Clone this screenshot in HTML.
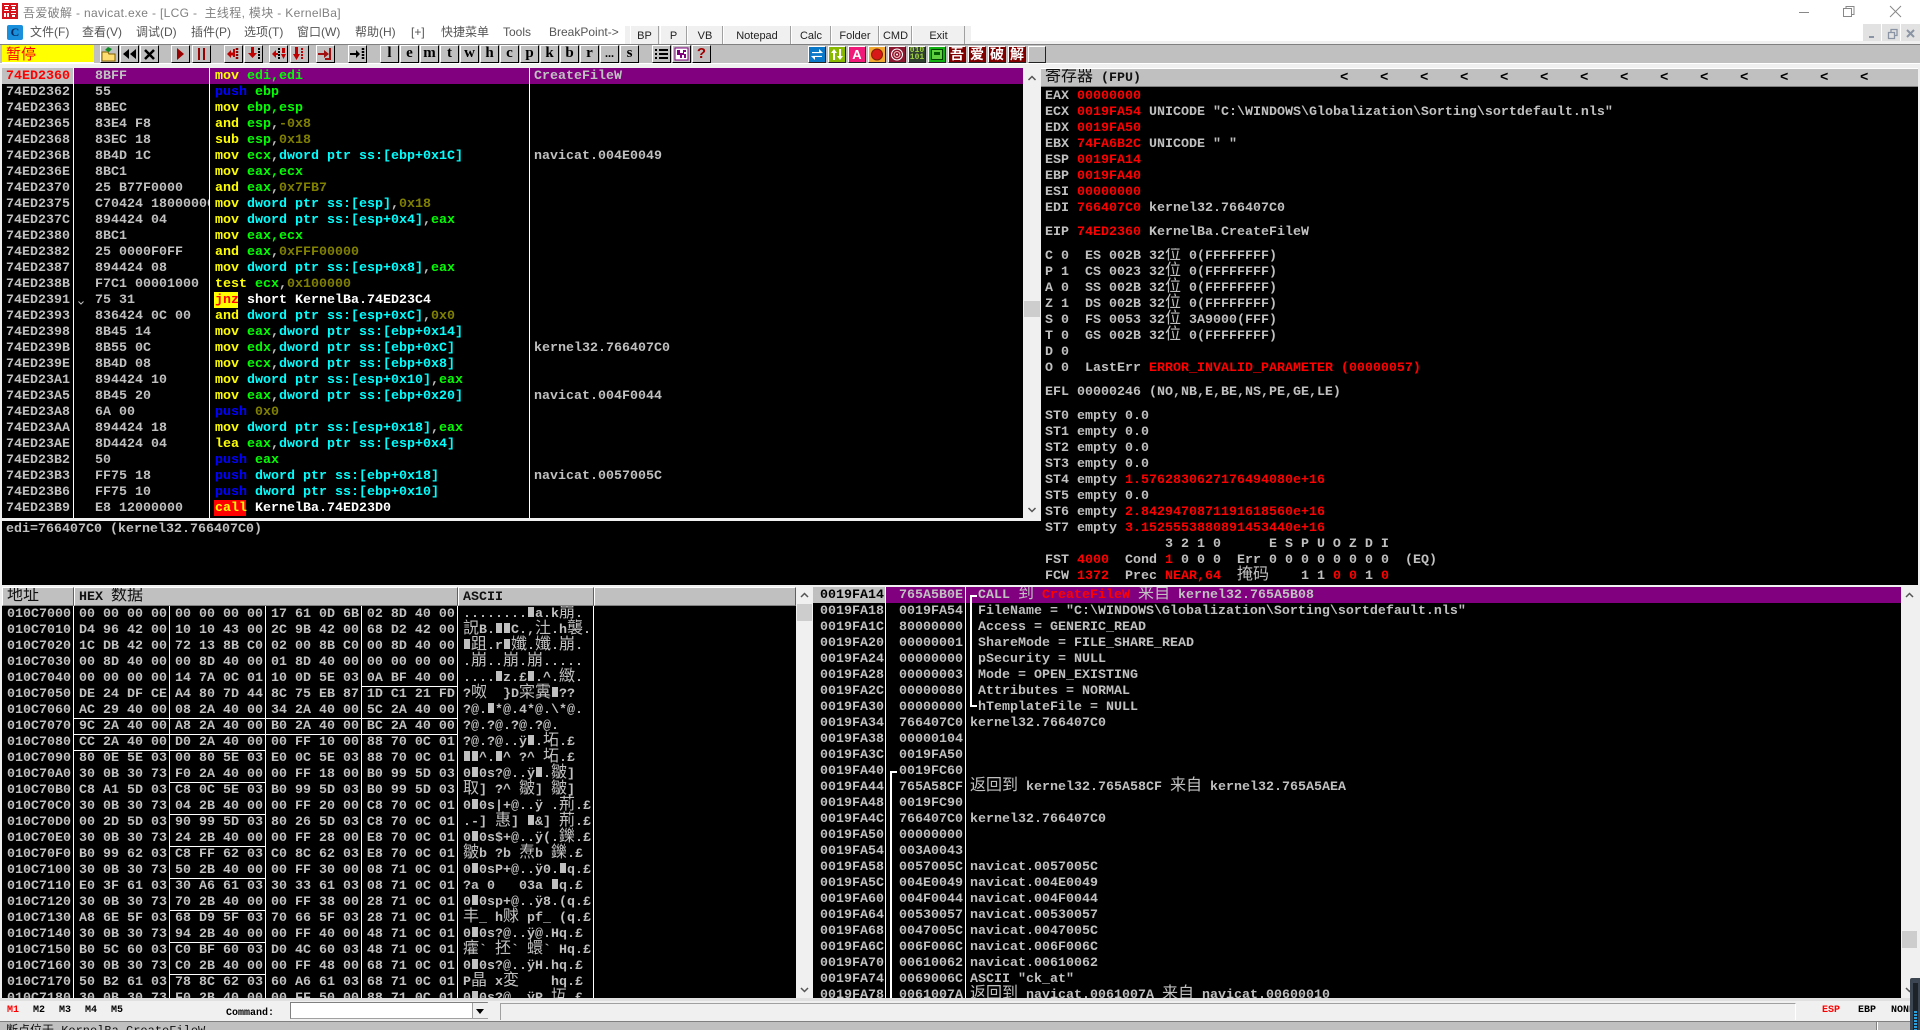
<!DOCTYPE html>
<html><head><meta charset="utf-8"><title>吾爱破解 - navicat.exe</title>
<style>
html,body{margin:0;padding:0;width:1920px;height:1030px;overflow:hidden;background:#f0f0f0}
div,pre{position:absolute;margin:0;padding:0}
svg{position:absolute;left:0;top:0;display:block}
pre,.mono{font:bold 13.33px/16px "Liberation Mono","Noto Sans CJK SC",monospace;white-space:pre;color:#c0c0c0}
pre{overflow:hidden;padding-top:1px;box-sizing:border-box}
i{font:normal 16px/0 "WenQuanYi Zen Hei","Noto Sans CJK SC",sans-serif}
u{display:inline-block;width:6px;height:10px;margin:0 1px;background:#c0c0c0;text-decoration:none}
.k{background:#000}
.y{color:#ff0}.u{color:#00f}.g{color:#0f0}.c{color:#0ff}.o{color:#808000}.w{color:#fff}.r{color:#f00}
.v{position:absolute;width:1px;background:#fff}
.h{position:absolute;height:1px;background:#fff}
.ui{font:12px/16px "Liberation Sans","Noto Sans CJK SC",sans-serif;color:#555;white-space:nowrap}
.tb{top:26px;height:19px;background:#f0f0f0;border-right:1px solid #a0a0a0;border-left:1px solid #fff;font:11px/20px "Liberation Sans",sans-serif;color:#222;text-align:center;box-sizing:border-box}
.b{top:45px;width:19px;height:18px;box-sizing:border-box;background:#c0c0c0;border:1px solid;border-color:#fff #000 #000 #fff;font:bold 15px/15px "Liberation Serif",serif;color:#000;text-align:center;overflow:hidden}
.n{top:46px;width:18px;height:17px;box-sizing:border-box;border:1px solid;border-color:#fff #222 #222 #fff;overflow:hidden;font:bold 14px/15px "WenQuanYi Zen Hei","Noto Sans CJK SC",sans-serif;color:#fff;text-align:center}
.hd{background:#c0c0c0;box-sizing:border-box;border-top:1px solid #fff;border-left:1px solid #fff;border-right:1px solid #606060;border-bottom:1px solid #808080;color:#111;font:bold 13.33px/19px "Liberation Mono","Noto Sans CJK SC",monospace;white-space:pre;overflow:hidden}
.sm{font:bold 10px/12px "Liberation Mono",monospace;color:#000;white-space:pre}
</style></head><body>

<!-- title bar -->
<div style="left:0;top:0;width:1920px;height:44px;background:#fff"></div>
<div style="left:2px;top:3px;width:16px;height:16px">
<svg width="16" height="16"><rect width="16" height="16" fill="#d8121a"/><path d="M2 2h5v1H2zM9 2h5v1H9zM3 4h3v2H3zM10 4h3v2h-3zM2 7h5v1H2zM9 7h5v1H9zM2 10h2v4H2zM5 10h2v4H5zM9 10h5v1H9zM10 12h3v2h-3z" fill="#fff"/></svg></div>
<div class="ui" style="left:23px;top:5px;color:#808080;letter-spacing:.33px">吾爱破解 - navicat.exe - [LCG -&nbsp; 主线程, 模块 - KernelBa]</div>
<svg style="left:1795px;top:0" width="125" height="24"><path d="M4 12.500h10" stroke="#888"/><path d="M48.500 8.500h8v8h-8zM51 8V6.500h8v8h-3" fill="#fff" stroke="#888"/><path d="M95 6l11 11M106 6L95 17" stroke="#888" fill="none"/></svg>

<!-- menu bar -->
<div style="left:7px;top:25px;width:16px;height:15px;background:#1a8fdc;border-radius:2px;font:bold 12px/15px 'Liberation Serif',serif;color:#002a60;text-align:center">C</div>
<div class="ui" style="left:30px;top:24px">文件(F)</div>
<div class="ui" style="left:82px;top:24px">查看(V)</div>
<div class="ui" style="left:136px;top:24px">调试(D)</div>
<div class="ui" style="left:191px;top:24px">插件(P)</div>
<div class="ui" style="left:244px;top:24px">选项(T)</div>
<div class="ui" style="left:297px;top:24px">窗口(W)</div>
<div class="ui" style="left:355px;top:24px">帮助(H)</div>
<div class="ui" style="left:411px;top:24px">[+]</div>
<div class="ui" style="left:441px;top:24px">快捷菜单</div>
<div class="ui" style="left:503px;top:24px">Tools</div>
<div class="ui" style="left:549px;top:24px">BreakPoint-&gt;</div>
<div style="left:625px;top:26px;width:346px;height:19px;background:#f0f0f0"></div>
<div class="tb" style="left:630px;width:29px">BP</div>
<div class="tb" style="left:660px;width:27px">P</div>
<div class="tb" style="left:687px;width:36px">VB</div>
<div class="tb" style="left:723px;width:68px">Notepad</div>
<div class="tb" style="left:791px;width:40px">Calc</div>
<div class="tb" style="left:831px;width:48px">Folder</div>
<div class="tb" style="left:879px;width:33px">CMD</div>
<div class="tb" style="left:912px;width:53px">Exit</div>
<div style="left:1863px;top:24px;width:18px;height:18px;background:#e2e2e2"></div>
<div style="left:1882px;top:24px;width:18px;height:18px;background:#e2e2e2"></div>
<div style="left:1901px;top:24px;width:19px;height:18px;background:#e2e2e2"></div>
<svg style="left:1863px;top:24px" width="57" height="18"><path d="M6 12h5v2H6z" fill="#8a94a4"/><path d="M25.500 8.500h6v6h-6zM28 8V5.500h6v6h-2" fill="none" stroke="#8a94a4" stroke-width="1.300"/><path d="M44 6l7 7M51 6l-7 7" stroke="#8a94a4" stroke-width="2"/></svg>
<div style="left:971px;top:41px;width:949px;height:3px;background:#f0f0f0"></div>

<!-- toolbar -->
<div style="left:0;top:44px;width:1920px;height:20px;box-sizing:border-box;background:#c0c0c0;border-top:1px solid #808080;border-bottom:1px solid #fff"></div>
<div style="left:2px;top:45px;width:92px;height:18px;background:#ff0;color:#f00;font:15px/18px 'Noto Sans CJK SC',sans-serif;padding-left:4px;box-sizing:border-box;border-bottom:1px solid #fff">暂停</div>

<div class="b" style="left:100px"><svg width="17" height="16"><path d="M1 6h6l1 2h6v7H1z" fill="#ffdc70" stroke="#806000"/><path d="M4 4l3-3 4 2-3 3z" fill="#0a8a20"/></svg></div>
<div class="b" style="left:120px"><svg width="17" height="16"><path d="M8 3v10L2 8zM15 3v10L9 8z"/></svg></div>
<div class="b" style="left:140px"><svg width="17" height="16"><path d="M4 4l9 9M13 4l-9 9" stroke="#000" stroke-width="2.500"/></svg></div>
<div class="b" style="left:171px"><svg width="17" height="16"><path d="M5 2v12l7-6z" fill="#900"/></svg></div>
<div class="b" style="left:192px"><svg width="17" height="16"><path d="M5 2h2v12H5zM10 2h2v12h-2z" fill="#900"/></svg></div>
<div class="b" style="left:224px"><svg width="17" height="16"><path d="M2 8l4-4v2.500h2V3h2v8H8V9.500H6V12z" fill="#c00000"/><path d="M12 2v12" stroke="#800" stroke-width="2.500" stroke-dasharray="2 1"/></svg></div>
<div class="b" style="left:244px"><svg width="17" height="16"><path d="M6 1h3v6h3l-4.500 5L3 7h3z" fill="#c00000"/><path d="M14 2v12" stroke="#000" stroke-width="2" stroke-dasharray="2 1"/></svg></div>
<div class="b" style="left:269px"><svg width="17" height="16"><path d="M9 2v12" stroke="#000" stroke-width="2" stroke-dasharray="2 1"/><path d="M2 8l4-4v3h2v2H6v3zM12 2h3v5h-3zM11 8h5l-2.500 5z" fill="#c00000"/></svg></div>
<div class="b" style="left:290px"><svg width="17" height="16"><path d="M11 2v12" stroke="#c00000" stroke-width="2" stroke-dasharray="2 1"/><path d="M4 1h3v7h2l-3.500 6L2 8h2z" fill="#c00000"/></svg></div>
<div class="b" style="left:316px"><svg width="17" height="16"><path d="M1 7h6V4l5 4-5 4V9H1zM12 2h2v12h-6v-2h4z" fill="#a01010"/></svg></div>
<div class="b" style="left:348px"><svg width="17" height="16"><path d="M1 7h6V4l4 4-4 4V9H1z"/><path d="M14 2v12" stroke="#000" stroke-width="2.500" stroke-dasharray="2 1"/></svg></div>

<div class="b" style="left:380px">l</div><div class="b" style="left:400px">e</div><div class="b" style="left:420px">m</div><div class="b" style="left:440px">t</div><div class="b" style="left:460px">w</div><div class="b" style="left:480px">h</div><div class="b" style="left:500px">c</div><div class="b" style="left:520px">p</div><div class="b" style="left:540px">k</div><div class="b" style="left:560px">b</div><div class="b" style="left:580px">r</div><div class="b" style="left:600px;font-size:12px">...</div><div class="b" style="left:620px">s</div>
<div class="b" style="left:652px"><svg width="17" height="16"><path d="M2 3h2v2H2zM6 3h9v2H6zM2 7h2v2H2zM6 7h9v2H6zM2 11h2v2H2zM6 11h9v2H6z"/></svg></div>
<div class="b" style="left:672px"><svg width="17" height="16"><rect x="2" y="2" width="13" height="12" fill="#fff" stroke="#800080"/><path d="M4 4h3v3h3V4h3v2h-2v2h2v4h-2V9H9v3H7V9H4z" fill="#800080"/></svg></div>
<div class="b" style="left:692px;color:#a00000;font:bold 15px/16px 'Liberation Sans',sans-serif">?</div>

<div class="n" style="left:808px;background:#0a78c8"><svg width="16" height="15"><path d="M3 5h7V2l4 4-4 .1H3zM13 10H6v3L2 9l4-.1h7z" fill="#fff"/></svg></div>
<div class="n" style="left:828px;background:#88b800"><svg width="16" height="15"><path d="M5 2l3 4H6v7H4V6H2zM11 13l-3-4h2V2h2v7h2z" fill="#fff"/></svg></div>
<div class="n" style="left:848px;background:#f01878;font:bold 13px/15px 'Liberation Sans',sans-serif">A</div>
<div class="n" style="left:868px;background:#f0a830"><svg width="16" height="15"><circle cx="8" cy="7.500" r="5.500" fill="#d81818" stroke="#802000"/></svg></div>
<div class="n" style="left:888px;background:#8a1830"><svg width="16" height="15"><circle cx="8" cy="7.500" r="5.500" fill="none" stroke="#fff"/><circle cx="8" cy="7.500" r="3" fill="none" stroke="#ffc0c0"/><circle cx="8" cy="7.500" r="1" fill="#fff"/></svg></div>
<div class="n" style="left:908px;background:#304030;color:#9fd040;font:bold 8px/7px 'Liberation Mono',monospace">010<br>101</div>
<div class="n" style="left:928px;background:#10b010"><svg width="16" height="15"><rect x="2.500" y="2.500" width="11" height="10" fill="#60d040" stroke="#004000"/><path d="M5 5h6v3H5z" fill="#006000"/></svg></div>
<div class="n" style="left:948px;background:#800000">吾</div>
<div class="n" style="left:968px;background:#800000">爱</div>
<div class="n" style="left:988px;background:#800000">破</div>
<div class="n" style="left:1008px;background:#800000">解</div>
<div class="n" style="left:1028px;background:#c0c0c0"></div>

<!-- disassembly -->
<div class="k" style="left:2px;top:68px;width:1021px;height:450px"></div>
<div style="left:2px;top:68px;width:71px;height:16px;background:#c0c0c0"></div>
<div style="left:74px;top:68px;width:949px;height:16px;background:#800080"></div>
<div class="v" style="left:73px;top:68px;height:450px"></div>
<div class="v" style="left:209px;top:68px;height:450px"></div>
<div class="v" style="left:529px;top:68px;height:450px"></div>
<pre style="left:6px;top:68px;width:67px;height:450px"><span class="r">74ED2360</span>
74ED2362
74ED2363
74ED2365
74ED2368
74ED236B
74ED236E
74ED2370
74ED2375
74ED237C
74ED2380
74ED2382
74ED2387
74ED238B
74ED2391
74ED2393
74ED2398
74ED239B
74ED239E
74ED23A1
74ED23A5
74ED23A8
74ED23AA
74ED23AE
74ED23B2
74ED23B3
74ED23B6
74ED23B9</pre>
<pre style="left:95px;top:68px;width:114px;height:450px">8BFF
55
8BEC
83E4 F8
83EC 18
8B4D 1C
8BC1
25 B77F0000
C70424 18000000
894424 04
8BC1
25 0000F0FF
894424 08
F7C1 00001000
75 31
836424 0C 00
8B45 14
8B55 0C
8B4D 08
894424 10
8B45 20
6A 00
894424 18
8D4424 04
50
FF75 18
FF75 10
E8 12000000</pre>
<svg style="left:77px;top:294px" width="10" height="16"><path d="M1.500 7.500l2.500 2.500 2.500-2.500" fill="none" stroke="#c0c0c0"/></svg>
<div style="left:214px;top:292px;width:24px;height:16px;background:#ff0"></div>
<div style="left:214px;top:500px;width:32px;height:16px;background:#f00"></div>
<pre style="left:215px;top:68px;width:314px;height:450px"><span class="y">mov</span> <span class="g">edi,edi</span>
<span class="u">push</span> <span class="g">ebp</span>
<span class="y">mov</span> <span class="g">ebp,esp</span>
<span class="y">and</span> <span class="g">esp</span>,<span class="o">-0x8</span>
<span class="y">sub</span> <span class="g">esp</span>,<span class="o">0x18</span>
<span class="y">mov</span> <span class="g">ecx</span>,<span class="c">dword ptr ss:[ebp+0x1C]</span>
<span class="y">mov</span> <span class="g">eax,ecx</span>
<span class="y">and</span> <span class="g">eax</span>,<span class="o">0x7FB7</span>
<span class="y">mov</span> <span class="c">dword ptr ss:[esp]</span>,<span class="o">0x18</span>
<span class="y">mov</span> <span class="c">dword ptr ss:[esp+0x4]</span>,<span class="g">eax</span>
<span class="y">mov</span> <span class="g">eax,ecx</span>
<span class="y">and</span> <span class="g">eax</span>,<span class="o">0xFFF00000</span>
<span class="y">mov</span> <span class="c">dword ptr ss:[esp+0x8]</span>,<span class="g">eax</span>
<span class="y">test</span> <span class="g">ecx</span>,<span class="o">0x100000</span>
<span class="r">jnz</span> <span class="w">short KernelBa.74ED23C4</span>
<span class="y">and</span> <span class="c">dword ptr ss:[esp+0xC]</span>,<span class="o">0x0</span>
<span class="y">mov</span> <span class="g">eax</span>,<span class="c">dword ptr ss:[ebp+0x14]</span>
<span class="y">mov</span> <span class="g">edx</span>,<span class="c">dword ptr ss:[ebp+0xC]</span>
<span class="y">mov</span> <span class="g">ecx</span>,<span class="c">dword ptr ss:[ebp+0x8]</span>
<span class="y">mov</span> <span class="c">dword ptr ss:[esp+0x10]</span>,<span class="g">eax</span>
<span class="y">mov</span> <span class="g">eax</span>,<span class="c">dword ptr ss:[ebp+0x20]</span>
<span class="u">push</span> <span class="o">0x0</span>
<span class="y">mov</span> <span class="c">dword ptr ss:[esp+0x18]</span>,<span class="g">eax</span>
<span class="y">lea</span> <span class="g">eax</span>,<span class="c">dword ptr ss:[esp+0x4]</span>
<span class="u">push</span> <span class="g">eax</span>
<span class="u">push</span> <span class="c">dword ptr ss:[ebp+0x18]</span>
<span class="u">push</span> <span class="c">dword ptr ss:[ebp+0x10]</span>
<span class="y">call</span> <span class="w">KernelBa.74ED23D0</span></pre>
<pre style="left:534px;top:68px;width:480px;height:450px">CreateFileW




navicat.004E0049











kernel32.766407C0


navicat.004F0044




navicat.0057005C</pre>
<div style="left:1023px;top:68px;width:18px;height:450px;background:#f0f0f0"></div>
<div style="left:1024px;top:301px;width:16px;height:16px;background:#cdcdcd"></div>
<svg style="left:1023px;top:68px" width="18" height="450"><path d="M5.500 12l3.500-3.500 3.500 3.500M5.500 440l3.500 3.500 3.500-3.500" fill="none" stroke="#555" stroke-width="1.500"/></svg>

<!-- info -->
<div class="k" style="left:2px;top:521px;width:1039px;height:64px"></div>
<pre style="left:6px;top:521px;width:800px;height:20px">edi=766407C0 (kernel32.766407C0)</pre>

<!-- registers -->
<div class="hd" style="left:1041px;top:68px;width:877px;height:19px;padding-left:4px;border-left:0;border-right:0"><i style="line-height:0">寄存器</i> (FPU)</div>
<div class="mono" style="left:1340px;top:69px;color:#000;font-size:14px;line-height:18px;word-spacing:23.200px;white-space:normal;width:570px">&lt; &lt; &lt; &lt; &lt; &lt; &lt; &lt; &lt; &lt; &lt; &lt; &lt; &lt;</div>
<div class="k" style="left:1041px;top:87px;width:877px;height:498px"></div>
<pre style="left:1045px;top:88px;width:870px;height:129px">EAX <span class="r">00000000</span>
ECX <span class="r">0019FA54</span> UNICODE "C:\WINDOWS\Globalization\Sorting\sortdefault.nls"
EDX <span class="r">0019FA50</span>
EBX <span class="r">74FA6B2C</span> UNICODE " "
ESP <span class="r">0019FA14</span>
EBP <span class="r">0019FA40</span>
ESI <span class="r">00000000</span>
EDI <span class="r">766407C0</span> kernel32.766407C0</pre>
<pre style="left:1045px;top:224px;width:870px;height:18px">EIP <span class="r">74ED2360</span> KernelBa.CreateFileW</pre>
<pre style="left:1045px;top:248px;width:870px;height:130px">C 0  ES 002B 32<i>位</i> 0(FFFFFFFF)
P 1  CS 0023 32<i>位</i> 0(FFFFFFFF)
A 0  SS 002B 32<i>位</i> 0(FFFFFFFF)
Z 1  DS 002B 32<i>位</i> 0(FFFFFFFF)
S 0  FS 0053 32<i>位</i> 3A9000(FFF)
T 0  GS 002B 32<i>位</i> 0(FFFFFFFF)
D 0
O 0  LastErr <span class="r">ERROR_INVALID_PARAMETER (00000057)</span></pre>
<pre style="left:1045px;top:384px;width:870px;height:18px">EFL 00000246 (NO,NB,E,BE,NS,PE,GE,LE)</pre>
<pre style="left:1045px;top:408px;width:870px;height:177px">ST0 empty 0.0
ST1 empty 0.0
ST2 empty 0.0
ST3 empty 0.0
ST4 empty <span class="r">1.5762830627176494080e+16</span>
ST5 empty 0.0
ST6 empty <span class="r">2.8429470871191618560e+16</span>
ST7 empty <span class="r">3.1525553880891453440e+16</span>
               3 2 1 0      E S P U O Z D I
FST <span class="r">4000</span>  Cond <span class="r">1</span> 0 0 0  Err 0 0 0 0 0 0 0 0  (EQ)
FCW <span class="r">1372</span>  Prec <span class="r">NEAR,64</span>  <i>掩码</i>    1 1 <span class="r">0</span> <span class="r">0</span> 1 <span class="r">0</span></pre>

<!-- dump -->
<div class="hd" style="left:2px;top:587px;width:72px;height:19px;padding-left:4px;font-weight:normal"><i style="line-height:0">地址</i></div>
<div class="hd" style="left:74px;top:587px;width:384px;height:19px;padding-left:4px">HEX <i style="line-height:0">数据</i></div>
<div class="hd" style="left:458px;top:587px;width:136px;height:19px;padding-left:4px">ASCII</div>
<div class="hd" style="left:594px;top:587px;width:202px;height:19px"></div>
<div class="k" style="left:2px;top:606px;width:794px;height:392px"></div>
<div class="v" style="left:73px;top:606px;height:392px"></div>
<div class="v" style="left:169px;top:606px;height:392px"></div>
<div class="v" style="left:265px;top:606px;height:392px"></div>
<div class="v" style="left:361px;top:606px;height:392px"></div>
<div class="v" style="left:457px;top:606px;height:392px"></div>
<div class="v" style="left:593px;top:606px;height:392px"></div>
<div class="h" style="left:361px;top:686px;width:96px"></div>
<div class="h" style="left:73px;top:718px;width:384px"></div>
<div class="h" style="left:73px;top:734px;width:384px"></div>
<div class="h" style="left:73px;top:750px;width:192px"></div>
<div class="h" style="left:169px;top:782px;width:96px"></div>
<div class="h" style="left:169px;top:814px;width:96px"></div>
<div class="h" style="left:169px;top:846px;width:96px"></div>
<div class="h" style="left:169px;top:878px;width:96px"></div>
<div class="h" style="left:169px;top:910px;width:96px"></div>
<div class="h" style="left:169px;top:942px;width:96px"></div>
<div class="h" style="left:169px;top:974px;width:96px"></div>
<pre style="left:7px;top:606px;width:66px;height:392px">010C7000
010C7010
010C7020
010C7030
010C7040
010C7050
010C7060
010C7070
010C7080
010C7090
010C70A0
010C70B0
010C70C0
010C70D0
010C70E0
010C70F0
010C7100
010C7110
010C7120
010C7130
010C7140
010C7150
010C7160
010C7170
010C7180</pre>
<pre style="left:79px;top:606px;width:378px;height:392px">00 00 00 00 00 00 00 00 17 61 0D 6B 02 8D 40 00
D4 96 42 00 10 10 43 00 2C 9B 42 00 68 D2 42 00
1C DB 42 00 72 13 8B C0 02 00 8B C0 00 8D 40 00
00 8D 40 00 00 8D 40 00 01 8D 40 00 00 00 00 00
00 00 00 00 14 7A 0C 01 10 0D 5E 03 0A BF 40 00
DE 24 DF CE A4 80 7D 44 8C 75 EB 87 1D C1 21 FD
AC 29 40 00 08 2A 40 00 34 2A 40 00 5C 2A 40 00
9C 2A 40 00 A8 2A 40 00 B0 2A 40 00 BC 2A 40 00
CC 2A 40 00 D0 2A 40 00 00 FF 10 00 88 70 0C 01
80 0E 5E 03 00 80 5E 03 E0 0C 5E 03 88 70 0C 01
30 0B 30 73 F0 2A 40 00 00 FF 18 00 B0 99 5D 03
C8 A1 5D 03 C8 0C 5E 03 B0 99 5D 03 B0 99 5D 03
30 0B 30 73 04 2B 40 00 00 FF 20 00 C8 70 0C 01
00 2D 5D 03 90 99 5D 03 80 26 5D 03 C8 70 0C 01
30 0B 30 73 24 2B 40 00 00 FF 28 00 E8 70 0C 01
B0 99 62 03 C8 FF 62 03 C0 8C 62 03 E8 70 0C 01
30 0B 30 73 50 2B 40 00 00 FF 30 00 08 71 0C 01
E0 3F 61 03 30 A6 61 03 30 33 61 03 08 71 0C 01
30 0B 30 73 70 2B 40 00 00 FF 38 00 28 71 0C 01
A8 6E 5F 03 68 D9 5F 03 70 66 5F 03 28 71 0C 01
30 0B 30 73 94 2B 40 00 00 FF 40 00 48 71 0C 01
B0 5C 60 03 C0 BF 60 03 D0 4C 60 03 48 71 0C 01
30 0B 30 73 C0 2B 40 00 00 FF 48 00 68 71 0C 01
50 B2 61 03 78 8C 62 03 60 A6 61 03 68 71 0C 01
30 0B 30 73 F0 2B 40 00 00 FF 50 00 88 71 0C 01</pre>
<pre style="left:463px;top:606px;width:130px;height:392px">........<u></u>a.k<i>崩</i>.
<i>詋</i>B.<u></u><u></u>C.,<i>汢</i>.h<i>襲</i>.
<u></u><i>跙</i>.r<u></u><i>孅</i>.<i>孅</i>.<i>崩</i>.
.<i>崩</i>..<i>崩</i>.<i>崩</i>.....
....<u></u>z.£<u></u>.^.<i>緻</i>.
?<i>呶</i>  }D<i>寀</i><i>霬</i><u></u>??
?@.<u></u>*@.4*@.\*@.
?@.?@.?@.?@.
?@.?@..ÿ<u></u>.<i>坧</i>.£
<u></u><u></u>^.<u></u>^ ?^ <i>坧</i>.£
0<u></u>0s?@..ÿ<u></u>.<i>皺</i>]
<i>取</i>] ?^ <i>皺</i>] <i>皺</i>]
0<u></u>0s|+@..ÿ .<i>荊</i>.£
.-] <i>惠</i>] <u></u>&amp;] <i>荊</i>.£
0<u></u>0s$+@..ÿ(.<i>鑠</i>.£
<i>皺</i>b ?b <i>焘</i>b <i>鑠</i>.£
0<u></u>0sP+@..ÿ0.<u></u>q.£
?a 0   03a <u></u>q.£
0<u></u>0sp+@..ÿ8.(q.£
<i>丰</i>_ h<i>赇</i> pf_ (q.£
0<u></u>0s?@..ÿ@.Hq.£
<i>癨</i>` <i>抷</i>` <i>蠉</i>` Hq.£
0<u></u>0s?@..ÿH.hq.£
P<i>晶</i> x<i>変</i>    hq.£
0<u></u>0s?@..ÿP.<i>坘</i>.£</pre>
<div style="left:796px;top:587px;width:17px;height:411px;background:#f0f0f0"></div>
<div style="left:797px;top:604px;width:15px;height:17px;background:#cdcdcd"></div>
<svg style="left:796px;top:587px" width="17" height="411"><path d="M5 10l3.500-3.500 3.500 3.500M5 401l3.500 3.500 3.500-3.500" fill="none" stroke="#555" stroke-width="1.500"/></svg>

<!-- stack -->
<div class="k" style="left:813px;top:587px;width:1088px;height:411px"></div>
<div style="left:813px;top:587px;width:72px;height:16px;background:#c0c0c0"></div>
<div style="left:886px;top:587px;width:1015px;height:16px;background:#800080"></div>
<div class="v" style="left:885px;top:587px;height:411px"></div>
<div class="v" style="left:965px;top:587px;height:411px"></div>
<div class="v" style="left:970px;top:595px;height:112px;width:2px"></div>
<div class="h" style="left:970px;top:595px;width:7px;height:2px"></div>
<div class="h" style="left:970px;top:705px;width:7px;height:2px"></div>
<div class="v" style="left:890px;top:771px;height:227px;width:2px"></div>
<div class="h" style="left:890px;top:771px;width:7px;height:2px"></div>
<pre style="left:820px;top:587px;width:64px;height:411px"><span style="color:#000">0019FA14</span>
0019FA18
0019FA1C
0019FA20
0019FA24
0019FA28
0019FA2C
0019FA30
0019FA34
0019FA38
0019FA3C
0019FA40
0019FA44
0019FA48
0019FA4C
0019FA50
0019FA54
0019FA58
0019FA5C
0019FA60
0019FA64
0019FA68
0019FA6C
0019FA70
0019FA74
0019FA78</pre>
<pre style="left:899px;top:587px;width:66px;height:411px">765A5B0E
0019FA54
80000000
00000001
00000000
00000003
00000080
00000000
766407C0
00000104
0019FA50
0019FC60
765A58CF
0019FC90
766407C0
00000000
003A0043
0057005C
004E0049
004F0044
00530057
0047005C
006F006C
00610062
0069006C
0061007A</pre>
<pre style="left:970px;top:587px;width:925px;height:411px"> CALL <i>到</i> <span class="r">CreateFileW</span> <i>来自</i> kernel32.765A5B08
 FileName = "C:\WINDOWS\Globalization\Sorting\sortdefault.nls"
 Access = GENERIC_READ
 ShareMode = FILE_SHARE_READ
 pSecurity = NULL
 Mode = OPEN_EXISTING
 Attributes = NORMAL
 hTemplateFile = NULL
kernel32.766407C0



<i>返回到</i> kernel32.765A58CF <i>来自</i> kernel32.765A5AEA

kernel32.766407C0


navicat.0057005C
navicat.004E0049
navicat.004F0044
navicat.00530057
navicat.0047005C
navicat.006F006C
navicat.00610062
ASCII "ck_at"
<i>返回到</i> navicat.0061007A <i>来自</i> navicat.00600010</pre>
<div style="left:1901px;top:587px;width:19px;height:411px;background:#f0f0f0"></div>
<div style="left:1902px;top:931px;width:15px;height:17px;background:#cdcdcd"></div>
<svg style="left:1901px;top:587px" width="17" height="411"><path d="M5 10l3.500-3.500 3.500 3.500M5 401l3.500 3.500 3.500-3.500" fill="none" stroke="#555" stroke-width="1.500"/></svg>

<!-- bottom -->
<div style="left:0;top:998px;width:1920px;height:3px;background:#e0e0e0"></div>
<div style="left:500px;top:1003px;width:1296px;height:17px;box-sizing:border-box;border-top:1px solid #a0a0a0;border-left:1px solid #a0a0a0;border-right:1px solid #fff"></div>
<div class="sm" style="left:7px;top:1005px;color:#f00">M1</div>
<div class="sm" style="left:33px;top:1005px">M2</div>
<div class="sm" style="left:59px;top:1005px">M3</div>
<div class="sm" style="left:85px;top:1005px">M4</div>
<div class="sm" style="left:111px;top:1005px">M5</div>
<div class="sm" style="left:226px;top:1008px">Command:</div>
<div style="left:290px;top:1002px;width:198px;height:17px;box-sizing:border-box;background:#fff;border:1px solid;border-color:#808080 #a0a0a0 #a0a0a0 #808080"></div>
<div style="left:472px;top:1003px;width:15px;height:15px;background:#f0f0f0;border-left:1px solid #a0a0a0"></div>
<svg style="left:473px;top:1003px" width="14" height="15"><path d="M3 6h8l-4 5z"/></svg>
<div class="sm" style="left:1822px;top:1005px;color:#f00">ESP</div>
<div class="sm" style="left:1858px;top:1005px">EBP</div>
<div class="sm" style="left:1891px;top:1005px">NONE</div>
<div style="left:0;top:1021px;width:1920px;height:9px;background:#c0c0c0;border-top:1px solid #808080;box-sizing:border-box;overflow:hidden">
<div style="left:6px;top:2px;font:12px/14px 'Liberation Mono','Noto Sans CJK SC',monospace;color:#111;white-space:pre">断点位于 KernelBa.CreateFileW</div>
<div style="left:1876px;top:0;width:1px;height:9px;background:#fff;border-left:1px solid #808080"></div>
</div>
<div style="left:1910px;top:978px;width:10px;height:52px;background:#3c4652;border-radius:2px 0 0 0"></div>
<div style="left:1913px;top:983px;width:5px;height:47px;background:#1c2228"></div>
<div style="left:1914px;top:1011px;width:3px;height:19px;background:repeating-linear-gradient(#2aa0dc 0 2px,#1c2228 2px 3px)"></div>
</body></html>
